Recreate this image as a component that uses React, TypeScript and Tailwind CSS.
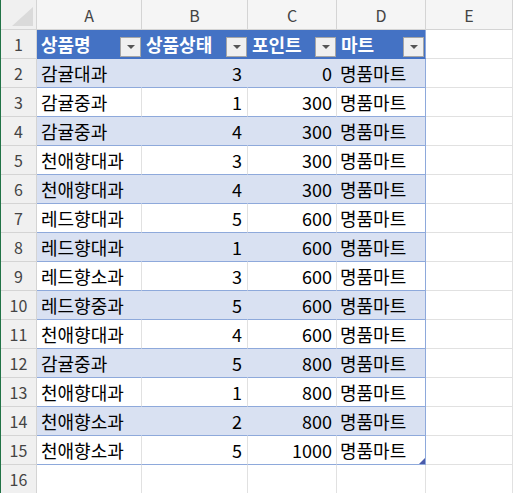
const rows: [string, number, number, string][] = [
  ["감귤대과", 3, 0, "명품마트"],
  ["감귤중과", 1, 300, "명품마트"],
  ["감귤중과", 4, 300, "명품마트"],
  ["천애향대과", 3, 300, "명품마트"],
  ["천애향대과", 4, 300, "명품마트"],
  ["레드향대과", 5, 600, "명품마트"],
  ["레드향대과", 1, 600, "명품마트"],
  ["레드향소과", 3, 600, "명품마트"],
  ["레드향중과", 5, 600, "명품마트"],
  ["천애향대과", 4, 600, "명품마트"],
  ["감귤중과", 5, 800, "명품마트"],
  ["천애향대과", 1, 800, "명품마트"],
  ["천애향소과", 2, 800, "명품마트"],
  ["천애향소과", 5, 1000, "명품마트"],
];

const cols = "grid grid-cols-[36px_105px_106px_89px_89px_87px]";
const font = { fontFamily: '"Noto Sans CJK KR", "Noto Sans", sans-serif' };

function FilterButton() {
  return (
    <span className="ml-auto mr-[1px] mb-[1px] flex h-[20px] w-[21px] shrink-0 items-center justify-center self-end border border-[#a6a6a6] bg-[#f0f0f0]">
      <svg width="8" height="4" viewBox="0 0 8 4">
        <path d="M0 0h8L4 4z" fill="#555" />
      </svg>
    </span>
  );
}

function RowHead({ n }: { n: number }) {
  return (
    <div className="flex h-[29px] items-center justify-center border-b border-r border-[#d4d4d4] bg-[#f0f0f0] text-[16px] text-[#444]">
      {n}
    </div>
  );
}

export default function App() {
  const headers = ["상품명", "상품상태", "포인트", "마트"];

  return (
    <div className="h-[493px] w-[513px] overflow-hidden border-l border-[#217346] bg-white" style={font}>
      {/* column letters */}
      <div className={`${cols} h-[30px] border-b border-[#d4d4d4] bg-[#f5f5f5]`}>
        <div className="relative border-r border-[#d4d4d4] bg-[#f0f0f0]">
          <svg className="absolute right-[3px] bottom-[3px]" width="21" height="19" viewBox="0 0 21 19">
            <path d="M21 0V19H0z" fill="#dadada" />
          </svg>
        </div>
        {["A", "B", "C", "D", "E"].map((c) => (
          <div key={c} className="flex items-center justify-center border-r border-[#d4d4d4] text-[16px] text-[#444]">
            {c}
          </div>
        ))}
      </div>

      {/* header row */}
      <div className={cols}>
        <RowHead n={1} />
        {headers.map((h, i) => (
          <div
            key={h}
            className={`flex h-[29px] items-center border-b border-[#4472c4] bg-[#4472c4] pl-[4px] text-[18px] font-bold text-white ${
              i === 3 ? "border-r border-r-[#8ea9db]" : ""
            }`}
          >
            <span className="leading-none">{h}</span>
            <FilterButton />
          </div>
        ))}
        <div className="border-b border-r border-[#e1e1e1]" />
      </div>

      {/* data rows */}
      {rows.map((r, idx) => {
        const band = idx % 2 === 0;
        const bg = band ? "bg-[#d9e1f2] border-r-[#d9e1f2]" : "bg-white border-r-[#e1e1e1]";
        const last = idx === rows.length - 1;
        return (
          <div key={idx} className={cols}>
            <RowHead n={idx + 2} />
            <div className={`flex h-[29px] items-center border-b border-r border-b-[#8ea9db] pl-[4px] text-[18px] text-black ${bg}`}>
              {r[0]}
            </div>
            <div className={`flex h-[29px] items-center justify-end border-b border-r border-b-[#8ea9db] pr-[5px] text-[18px] text-black ${bg}`}>
              {r[1]}
            </div>
            <div className={`flex h-[29px] items-center justify-end border-b border-r border-b-[#8ea9db] pr-[4px] text-[18px] text-black ${bg}`}>
              {r[2]}
            </div>
            <div
              className={`relative flex h-[29px] items-center border-b border-r border-b-[#8ea9db] border-r-[#8ea9db] pl-[3px] text-[18px] text-black ${
                band ? "bg-[#d9e1f2]" : "bg-white"
              }`}
            >
              {r[3]}
              {last && (
                <svg className="absolute right-0 bottom-0" width="6" height="6" viewBox="0 0 6 6">
                  <path d="M6 0V6H0z" fill="#4a5bab" />
                </svg>
              )}
            </div>
            <div className="border-b border-r border-[#e1e1e1]" />
          </div>
        );
      })}

      {/* row 16 */}
      <div className={cols}>
        <RowHead n={16} />
        <div className="border-b border-r border-[#e1e1e1]" />
        <div className="border-b border-r border-[#e1e1e1]" />
        <div className="border-b border-r border-[#e1e1e1]" />
        <div className="border-b border-r border-[#e1e1e1]" />
        <div className="border-b border-r border-[#e1e1e1]" />
      </div>
    </div>
  );
}
